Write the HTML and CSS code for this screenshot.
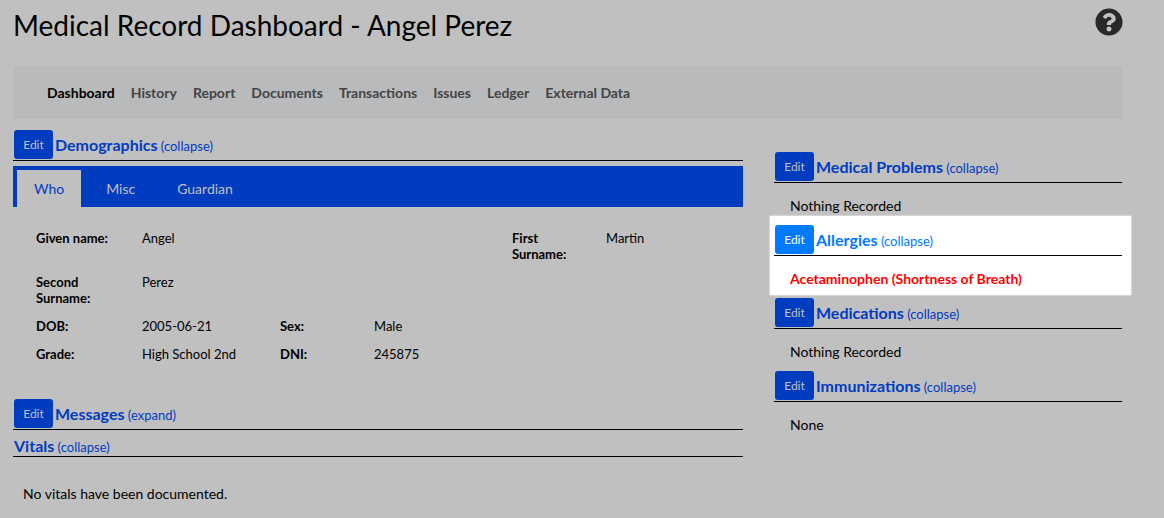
FILE: index.html
```html
<!DOCTYPE html>
<html lang="en">
<head>
<meta charset="utf-8">
<title>Medical Record Dashboard</title>
<link rel="stylesheet" href="styles.css">
</head>
<body>
<header class="page-header">
  <h1>Medical Record Dashboard - Angel Perez</h1>
  <button class="help" type="button" aria-label="Help">
    <svg viewBox="0 0 512 512" aria-hidden="true"><path fill="currentColor" d="M504 256c0 137-111 248-248 248S8 393 8 256 119 8 256 8s248 111 248 248zM262.700 90c-54.500 0-89.300 23-116.500 63.800-3.500 5.300-2.400 12.400 2.700 16.300l34.700 26.300c5.200 3.900 12.600 3 16.700-2.100 17.900-22.700 30.100-35.800 57.300-35.800 20.400 0 45.700 13.100 45.700 33 0 15-12.400 22.700-32.500 34C247.100 238.500 216 254.900 216 296v4c0 6.600 5.400 12 12 12h56c6.600 0 12-5.400 12-12v-1.300c0-28.500 83.200-29.600 83.200-106.700 0-58-60.200-102-116.500-102zM256 338c-25.400 0-46 20.600-46 46s20.600 46 46 46 46-20.600 46-46-20.600-46-46-46z"/></svg>
  </button>
</header>
<nav class="menu" aria-label="Patient record">
  <a class="active" href="#">Dashboard</a>
  <a href="#">History</a>
  <a href="#">Report</a>
  <a href="#">Documents</a>
  <a href="#">Transactions</a>
  <a href="#">Issues</a>
  <a href="#">Ledger</a>
  <a href="#">External Data</a>
</nav>
<main class="columns">
  <div class="main-column">
    <section class="demographics">
      <div class="section-head"><button class="edit" type="button">Edit</button><a class="toggle" href="#"><b>Demographics</b> (collapse)</a></div>
      <div class="tabs">
        <button class="tab selected" type="button">Who</button>
        <button class="tab" type="button">Misc</button>
        <button class="tab" type="button">Guardian</button>
      </div>
      <table class="details">
        <colgroup><col class="c1"><col class="c2"><col class="c3"><col class="c2"><col class="c3"><col></colgroup>
        <tbody>
        <tr><th scope="row">Given name:</th><td colspan="3">Angel</td><th scope="row">First<br>Surname:</th><td>Martin</td></tr>
        <tr><th scope="row">Second<br>Surname:</th><td colspan="5">Perez</td></tr>
        <tr><th scope="row">DOB:</th><td>2005-06-21</td><th scope="row">Sex:</th><td colspan="3">Male</td></tr>
        <tr><th scope="row">Grade:</th><td>High School 2nd</td><th scope="row">DNI:</th><td colspan="3">245875</td></tr>
        </tbody>
      </table>
    </section>
    <section>
      <div class="section-head"><button class="edit" type="button">Edit</button><a class="toggle" href="#"><b>Messages</b> (expand)</a></div>
    </section>
    <section>
      <div class="section-head plain"><a class="toggle" href="#"><b>Vitals</b> (collapse)</a></div>
      <p class="vitals-note">No vitals have been documented.</p>
    </section>
  </div>
  <aside class="side-column">
    <section class="card">
      <div class="section-head"><button class="edit" type="button">Edit</button><a class="toggle" href="#"><b>Medical Problems</b> (collapse)</a></div>
      <p>Nothing Recorded</p>
    </section>
    <section class="card highlight">
      <div class="section-head"><button class="edit" type="button">Edit</button><a class="toggle" href="#"><b>Allergies</b> (collapse)</a></div>
      <p class="alert">Acetaminophen (Shortness of Breath)</p>
    </section>
    <section class="card">
      <div class="section-head"><button class="edit" type="button">Edit</button><a class="toggle" href="#"><b>Medications</b> (collapse)</a></div>
      <p>Nothing Recorded</p>
    </section>
    <section class="card">
      <div class="section-head"><button class="edit" type="button">Edit</button><a class="toggle" href="#"><b>Immunizations</b> (collapse)</a></div>
      <p>None</p>
    </section>
  </aside>
</main>
</body>
</html>
```
FILE: styles.css
```css
* { box-sizing: border-box; }

body {
  margin: 0;
  padding: 0 41px 0 13px;
  background: #c0c0c0;
  color: #000;
  font-family: Lato, sans-serif;
  font-size: 14px;
  line-height: 20px;
}

h1, p { margin: 0; }
a { text-decoration: none; }
button { font-family: inherit; border: 0; padding: 0; cursor: pointer; }

.page-header {
  display: flex;
  justify-content: space-between;
  align-items: flex-start;
  padding: 8px 0 24px;
}
h1 { font-size: 28px; font-weight: 400; line-height: 34px; }
.help { width: 28px; height: 28px; color: #272829; background: none; }
.help svg { display: block; width: 28px; height: 28px; }

.menu {
  display: flex;
  gap: 16px;
  padding: 17px 34px 16px;
  background: #b8babb;
}
.menu a { color: #444; font-weight: 700; }
.menu .active { color: #000; }

.columns {
  display: grid;
  grid-template-columns: 730fr 348fr;
  gap: 31px;
  padding: 11px 1px 0 0;
}
.side-column { padding-top: 22px; }

.section-head {
  display: flex;
  align-items: center;
  gap: 2px;
  height: 31px;
  padding-left: 1px;
  border-bottom: 1px solid #000;
}
.section-head.plain { height: 27px; padding-top: 6px; }
.edit {
  width: 39px;
  height: 29px;
  margin-bottom: 1px;
  border-radius: 3px;
  background: #003cc0;
  color: #c0c0c0;
  font-size: 12px;
}
.toggle { color: #003cc0; font-size: 13px; }
.toggle b { font-size: 16px; font-weight: 700; }

.tabs {
  display: flex;
  margin-top: 5px;
  padding: 4px 4px 0;
  background: #003cc0;
}
.tab {
  padding: 8px 17px;
  margin-right: 8px;
  background: none;
  color: #c0c0c0;
  font-size: 14px;
  line-height: 21px;
}
.tab.selected { background: #c0c0c0; color: #003cc0; }

.details {
  width: 100%;
  margin-top: 17px;
  border-collapse: collapse;
  table-layout: fixed;
  font-size: 13px;
  line-height: 16px;
}
.details th, .details td { padding: 6px 0; text-align: left; vertical-align: top; }
.details th { font-weight: 700; }
.details th:first-child { padding-left: 23px; }
.c1 { width: 129px; }
.c2 { width: 138px; }
.c3 { width: 94px; }
.demographics { margin-bottom: 31px; }

.vitals-note { padding: 27px 10px 0; }

.card p { padding: 13px 16px 9px; }
.card .alert { padding-bottom: 6px; color: #f00; font-weight: 700; }
.highlight {
  margin: -9px -9px 3px -4px;
  padding: 9px 9px 0 4px;
  background: #fff;
  box-shadow: 0 0 2px #fff;
}
.highlight .edit { background: #007bff; color: #fff; }
.highlight .toggle { color: #007bff; }
```
